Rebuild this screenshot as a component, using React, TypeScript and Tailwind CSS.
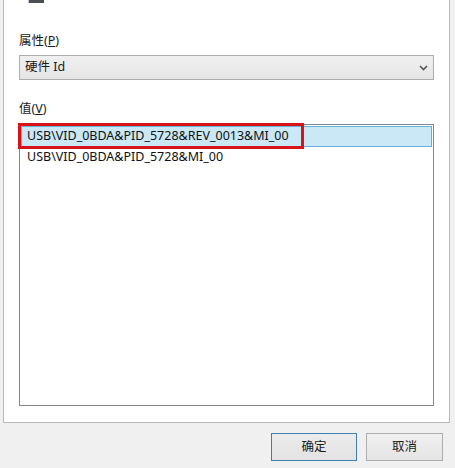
import React from "react";

export default function App() {
  const latin = { fontFamily: '"Noto Sans", "Noto Sans CJK SC", sans-serif' };
  return (
    <div className="w-[455px] h-[468px] bg-[#f0f0f0] relative overflow-hidden" style={latin}>
      <div className="ml-[3px] w-[447px] h-[423px] bg-white border-r border-b border-l border-[#b9b9b9] flex flex-col">
        <div className="ml-[24px] w-[16px] h-[3px] bg-[#4a4f55] border-l border-[#c7ccd2]" />
        <div className="px-[15px] pt-[30px] flex flex-col">
          <div className="text-[12.5px] leading-[16px] text-[#1a1a1a] h-[16px]">
            属性(<span className="underline">P</span>)
          </div>
          <div className="mt-[6px] h-[25px] border border-[#adadad] bg-gradient-to-b from-[#f0f0f0] to-[#e5e5e5] flex items-center justify-between pl-[5px] pr-[5px]">
            <span className="text-[12.5px] text-[#1a1a1a]">硬件 Id</span>
            <svg width="9" height="6" viewBox="0 0 9 6">
              <path d="M1 1 L4.5 4.5 L8 1" stroke="#555" strokeWidth="1.6" fill="none" />
            </svg>
          </div>
          <div className="mt-[21px] text-[12.5px] leading-[16px] text-[#1a1a1a] h-[16px]">
            值(<span className="underline">V</span>)
          </div>
          <div className="mt-[7px] h-[282px] border border-[#828790] bg-white p-px relative">
            <div className="h-[21px] bg-[#cbe8f6] border border-[#6bb0d2] flex items-center pl-[5px] text-[12.5px] text-[#111]">
              USB\VID_0BDA&amp;PID_5728&amp;REV_0013&amp;MI_00
            </div>
            <div className="h-[21px] flex items-center pl-[6px] text-[12.5px] text-[#111]">
              USB\VID_0BDA&amp;PID_5728&amp;MI_00
            </div>
            <div className="absolute left-[-2px] top-[-2px] w-[286px] h-[26px] border-[3px] border-[#d7141a]" />
          </div>
        </div>
      </div>
      <div className="flex justify-end gap-[9px] pr-[12px] mt-[10px]">
        <button className="w-[86px] h-[28px] border border-[#3c7fb1] bg-gradient-to-b from-[#ececec] to-[#e3e3e3] text-[12.5px] text-[#1a1a1a]">
          确定
        </button>
        <button className="w-[77px] h-[28px] border border-[#adadad] bg-gradient-to-b from-[#f0f0f0] to-[#e5e5e5] text-[12.5px] text-[#1a1a1a]">
          取消
        </button>
      </div>
    </div>
  );
}
